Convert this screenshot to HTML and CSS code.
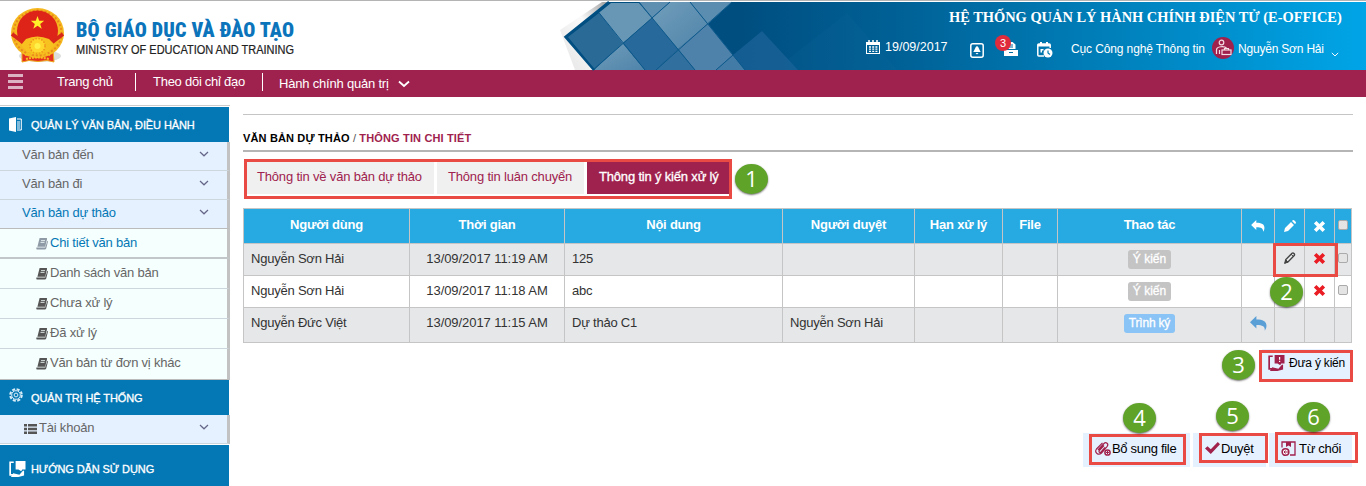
FILE: index.html
```html
<!DOCTYPE html>
<html lang="vi">
<head>
<meta charset="utf-8">
<title>E-Office</title>
<link rel="stylesheet" href="styles.css">
</head>
<body>
<svg class="defs" aria-hidden="true">
  <defs>
    <symbol id="chev" viewBox="0 0 10 6"><path d="M1 1l4 3.800L9 1" fill="none" stroke="currentColor" stroke-width="1.200"/></symbol>
    <symbol id="book" viewBox="0 0 12 12"><path d="M3.600 0h6.600c.8 0 1 .5.8 1.200L9.200 8.700H1.400zM1.200 9.500h8.100l2-6.800c.7.2.7.8.5 1.500L10.200 10.500c-.2.700-.7 1-1.400 1H1.500C.3 11.500.1 10.500.4 9.400z" fill="currentColor"/><path d="M5 2.600h4M4.500 4.400h4" stroke="#f5fffe" stroke-width=".8"/></symbol>
    <symbol id="cross" viewBox="0 0 12 12"><path d="M2 2l8 8M10 2l-8 8" stroke="currentColor" stroke-width="3.300" fill="none"/></symbol>
    <symbol id="reply" viewBox="0 0 16 14"><path d="M6 0v3.200c6 0 9.500 1.600 9.500 6 0 1.800-.7 3.300-1.600 4.600.4-4-1.900-5.400-7.900-5.400v3.400L0 5.800z" fill="currentColor"/></symbol>
    <symbol id="guide" viewBox="0 0 18 17"><path d="M5 1.300H1.200v13.500h3" fill="none" stroke="currentColor" stroke-width="1.800"/><path d="M7 0h10.500v9H14l-1 2-3-2H7zM2 17l2.500-4 6.500 1.500 4-4.500 1 .5v5L10 17z" fill="currentColor"/></symbol>
  </defs>
</svg>

<header class="header">
  <div class="brand">
    <svg class="emblem" viewBox="0 0 58 58">
      <ellipse cx="31" cy="49" rx="21" ry="6" fill="#ddd"/>
      <path d="M13 43h31l1 12-7-1.500-9 1-9-1-7 1.500z" fill="#e5301f" stroke="#f0a81d"/>
      <ellipse cx="28.500" cy="26" rx="26.500" ry="25" fill="#f5b81f"/>
      <ellipse cx="28.500" cy="26" rx="24" ry="22.500" fill="none" stroke="#e98a1c" stroke-width="2" stroke-dasharray="2 2"/>
      <ellipse cx="28.500" cy="24" rx="20.500" ry="20.500" fill="#de2419"/>
      <path d="M28.500 9l1.700 4.700 5 .1-4 3.100 1.500 4.800-4.200-2.900-4.200 2.900 1.500-4.800-4-3.100 5-.1z" fill="#fff02a"/>
      <path d="M3 27l12 9M54 27l-12 9" stroke="#d9261b" stroke-width="4"/>
      <path d="M12 38l5-6q11-5 23 0l6 6-7 7H18z" fill="#f7c21f"/>
      <circle cx="28.500" cy="39" r="7.500" fill="#ffd62c" stroke="#f0921b" stroke-width="1.500" stroke-dasharray="1.500 1.500"/>
      <circle cx="28.500" cy="39" r="3" fill="#fff04a"/>
      <path d="M16 48q12-4 25 0M17 52q11-3 23 0" stroke="#f6c11f" stroke-width="2" stroke-dasharray="2 1" fill="none"/>
    </svg>
    <svg class="brand-text" viewBox="0 0 230 58">
      <text class="brand-vi" x="1" y="30" textLength="218" lengthAdjust="spacing">BỘ GIÁO DỤC VÀ ĐÀO TẠO</text>
      <text class="brand-en" x="1" y="47" textLength="218" lengthAdjust="spacingAndGlyphs">MINISTRY OF EDUCATION AND TRAINING</text>
    </svg>
  </div>
  <div class="banner">
    <svg class="tiles" viewBox="560 2 340 68" preserveAspectRatio="none">
      <defs>
        <linearGradient id="sky" gradientUnits="userSpaceOnUse" x1="740" y1="0" x2="1366" y2="0"><stop offset="0" stop-color="#004e80"/><stop offset=".256" stop-color="#006196"/><stop offset="1" stop-color="#00a5e7"/></linearGradient>
        <linearGradient id="shade" x1="0" y1="1" x2="1" y2="0"><stop offset="0" stop-color="#e4e4e4"/><stop offset=".6" stop-color="#fafafa"/><stop offset="1" stop-color="#999"/></linearGradient>
        <linearGradient id="pale" x1="0" y1="0" x2="1" y2="1"><stop offset="0" stop-color="#719dba"/><stop offset="1" stop-color="#4f84aa"/></linearGradient>
      </defs>
      <path d="M602 2L560 30l15 40h25l10-68z" fill="url(#shade)"/>
      <path d="M609 2H900v68H594L565.500 37z" fill="url(#sky)"/>
      <path d="M568 37l31-24 23.700 30.300L594 69z" fill="#2a6a97"/>
      <path d="M599 12.700L611 3h28l13 15.300-29.300 25z" fill="#6896b5"/>
      <path d="M639 2h31l-18 16.300z" fill="#5e8fb1"/>
      <path d="M622.700 43.300L594 70h51z" fill="url(#pale)"/>
      <path d="M622.700 43.300l29.300-25L678 49l-22 21h-11z" fill="#27699a"/>
      <path d="M652 18.300L670 2h20l18 22-30 25z" fill="url(#pale)"/>
      <path d="M690 2h42l-24 22z" fill="#5b8db0"/>
      <path d="M678 49l30-25 25 31-17 15h-21z" fill="#4e82aa"/>
      <path d="M656 70l22-21 17 21z" fill="#306f9e"/>
      <path d="M716 70l17-15 12 15z" fill="#417ba6"/>
      <path d="M733 55l29-24 36 39h-53z" fill="#1c649a" opacity=".7"/>
      <path d="M787 60l60-47 50 57h-102z" fill="#176ba0" opacity=".15"/>
      <path d="M670 2l-77 68M732 2l-76 68M733 55l-17 15M599 12.700L645 70M639 2l56 68M690 2l55 68" stroke="#0c598c" fill="none"/>
      <path d="M609 2l-43.500 35L594 70" stroke="#004f82" stroke-width="2.500" fill="none"/>
    </svg>
    <div class="banner-info">
      <div class="system">HỆ THỐNG QUẢN LÝ HÀNH CHÍNH ĐIỆN TỬ (E-OFFICE)</div>
      <div class="tools">
        <svg class="i-cal" viewBox="0 0 14 14"><path d="M0 2h14v12H0z" fill="#fff"/><path d="M1 5h12v8H1z" fill="#006196"/><path d="M3 0v4M7 0v4M11 0v4" stroke="#fff" stroke-width="1.500"/><path d="M3 7h8.500M3 9.200h8.500M3 11.400h8.500" stroke="#fff" stroke-width="1.300" stroke-dasharray="2 1.200"/></svg>
        <span class="date">19/09/2017</span>
        <svg class="i-bell" viewBox="0 0 14 15"><rect x=".8" y=".8" width="12.400" height="13.400" rx="2" fill="none" stroke="#fff" stroke-width="1.500"/><path d="M7 3c2 1 2.200 4 3.700 6H3.300C4.800 7 5 4 7 3zM5.500 10h3l-1.500 1.600z" fill="#fff"/></svg>
        <span class="inbox"><svg class="i-inbox" viewBox="0 0 16 14"><path d="M3.500 0h6l3 2.500V7h-9zM1 8h14v6H1z" fill="#fff"/><path d="M6 10.500h4M5 3h5M5 5h5" stroke="#006ca3"/></svg><b class="badge">3</b></span>
        <svg class="i-sched" viewBox="0 0 16 16"><path d="M7 14H1.800a1 1 0 01-1-1V3a1 1 0 011-1h10.400a1 1 0 011 1v3" fill="none" stroke="#fff" stroke-width="1.500"/><path d="M1 2h12v2.500H1zM3 0h2v3H3zM9 0h2v3H9z" fill="#fff"/><circle cx="11" cy="11" r="4.500" fill="#fff"/><path d="M11 8.500V11l2 1.500" stroke="#0078b1" stroke-width="1.200" fill="none"/><path d="M3.500 7h3v1.500h-1.500v2h-1.500z" fill="#fff"/></svg>
        <span class="dept">Cục Công nghệ Thông tin</span>
        <svg class="avatar" viewBox="0 0 22 22"><circle cx="11" cy="11" r="11" fill="#a1214d"/><g fill="none" stroke="#f3dce4" stroke-width="1.200"><circle cx="9.500" cy="5.500" r="2.300"/><path d="M4.500 17v-4c0-4 8-4 10-2M7.500 13v4"/><rect x="10" y="13" width="9" height="4.500"/><path d="M12.500 13v-1.500h4V13"/></g></svg>
        <span class="user">Nguyễn Sơn Hải</span>
        <svg class="i-drop"><use href="#chev"/></svg>
      </div>
    </div>
  </div>
</header>

<nav class="nav">
  <span class="burger"><i></i><i></i><i></i></span>
  <a class="n1">Trang chủ</a>
  <a class="n2">Theo dõi chỉ đạo</a>
  <a class="n3">Hành chính quản trị</a>
  <svg class="nav-chev" viewBox="0 0 12 8"><path d="M1 1.500l5 4.500 5-4.500" fill="none" stroke="#fff" stroke-width="1.800"/></svg>
</nav>

<div class="page">
  <aside class="side">
    <div class="head"><svg class="i-doc" viewBox="0 0 13 15"><path d="M0 1.500L7 0v15l-7-1.500z" fill="#fff"/><path d="M8 2h4.300v11H8" fill="none" stroke="#fff"/><path d="M8 5h3M8 7h3M8 9h3M8 11h3" stroke="#fff"/></svg><span>QUẢN LÝ VĂN BẢN, ĐIỀU HÀNH</span></div>
    <a class="item">Văn bản đến<svg class="chev"><use href="#chev"/></svg></a>
    <a class="item">Văn bản đi<svg class="chev"><use href="#chev"/></svg></a>
    <a class="item open">Văn bản dự thảo<svg class="chev"><use href="#chev"/></svg></a>
    <a class="sub current"><svg class="bk"><use href="#book"/></svg>Chi tiết văn bản</a>
    <a class="sub"><svg class="bk"><use href="#book"/></svg>Danh sách văn bản</a>
    <a class="sub"><svg class="bk"><use href="#book"/></svg>Chưa xử lý</a>
    <a class="sub"><svg class="bk"><use href="#book"/></svg>Đã xử lý</a>
    <a class="sub last"><svg class="bk"><use href="#book"/></svg>Văn bản từ đơn vị khác</a>
    <div class="head second"><svg class="i-gear" viewBox="0 0 14 14"><g fill="none" stroke="#d9edf8"><circle cx="7" cy="7" r="5.800" stroke-width="2" stroke-dasharray="3 1.550"/><circle cx="7" cy="7" r="4.300"/><circle cx="7" cy="7" r="1.900"/></g></svg><span>QUẢN TRỊ HỆ THỐNG</span></div>
    <a class="item account"><svg class="i-list" viewBox="0 0 13 10"><path d="M0 0h3v2.500H0zM4 0h9v2.500H4zM0 3.700h3v2.500H0zM4 3.700h9v2.500H4zM0 7.500h3V10H0zM4 7.500h9V10H4z" fill="#555"/></svg>Tài khoản<svg class="chev"><use href="#chev"/></svg></a>
    <div class="head third"><svg class="i-guide"><use href="#guide"/></svg><span>HƯỚNG DẪN SỬ DỤNG</span></div>
  </aside>

  <main class="main">
    <div class="crumb"><b>VĂN BẢN DỰ THẢO</b> / <strong>THÔNG TIN CHI TIẾT</strong></div>
    <div class="tabs"><a class="tab t1">Thông tin về văn bản dự thảo</a><a class="tab t2">Thông tin luân chuyển</a><a class="tab active">Thông tin ý kiến xử lý</a></div>
    <table class="grid">
      <colgroup><col class="c1"><col class="c2"><col class="c3"><col class="c4"><col class="c5"><col class="c6"><col class="c7"><col class="c8"><col class="c9"><col class="c9"><col class="c11"></colgroup>
      <thead><tr><th>Người dùng</th><th>Thời gian</th><th>Nội dung</th><th>Người duyệt</th><th>Hạn xử lý</th><th>File</th><th>Thao tác</th>
        <th class="ic"><svg class="s-reply"><use href="#reply"/></svg></th>
        <th class="ic"><svg class="s-pen" viewBox="0 0 12 12"><path d="M0 12l1-4 6-6 3 3-6 6zM8 1l1-1q1 0 2 1t1 2l-1 1z" fill="#fff"/></svg></th>
        <th class="ic"><svg class="s-x"><use href="#cross"/></svg></th><th class="ic ck"><i class="box"></i></th></tr></thead>
      <tbody>
        <tr><td>Nguyễn Sơn Hải</td><td class="c">13/09/2017 11:19 AM</td><td>125</td><td></td><td></td><td></td><td class="ic"><span class="tag">Ý kiến</span></td><td></td>
          <td class="ic up"><svg class="s-pen" viewBox="0 0 12 12"><path d="M1 11l.8-3.500L8 1.300q1-.7 2 .2t.2 2.100L4 10z" fill="none" stroke="#444" stroke-width="1.400"/><path d="M7 2.200L9.500 4.500M1 11l1-3 2 2z" fill="#444" stroke="#444"/></svg></td>
          <td class="ic up red"><svg class="s-x"><use href="#cross"/></svg></td><td class="ic up ck"><i class="box"></i></td></tr>
        <tr><td>Nguyễn Sơn Hải</td><td class="c">13/09/2017 11:18 AM</td><td>abc</td><td></td><td></td><td></td><td class="ic"><span class="tag">Ý kiến</span></td><td></td><td></td><td class="ic up red"><svg class="s-x"><use href="#cross"/></svg></td><td class="ic up ck"><i class="box"></i></td></tr>
        <tr class="tall"><td>Nguyễn Đức Việt</td><td class="c">13/09/2017 11:15 AM</td><td>Dự thảo C1</td><td>Nguyễn Sơn Hải</td><td></td><td></td><td class="ic"><span class="tag blue">Trình ký</span></td><td class="ic back"><svg class="s-back"><use href="#reply"/></svg></td><td></td><td></td><td></td></tr>
      </tbody>
    </table>
    <div class="comment-row"><a class="btn comment"><svg class="b-comment" viewBox="0 0 18 17"><use href="#guide" width="18" height="17"/><path d="M12.300 2v3M12.300 6v1.500" stroke="#fff" stroke-width="1.300"/></svg>Đưa ý kiến</a></div>
    <div class="actions">
      <a class="btn a1"><svg class="b-clip" viewBox="0 0 16 15"><path d="M3 9l6-6.500c2-2 5 .5 3.200 2.800L6.500 12c-3 3-7.500-.5-5-4L7.500 1.800M9 4.500L4.300 9.500c-1 1.400.6 2.600 1.800 1.500L10 6.500" fill="none" stroke="#a1214d" stroke-width="1.200"/><circle cx="12.500" cy="11.500" r="2.600" fill="#e5f1ff" stroke="#a1214d" stroke-width="1.500"/><path d="M12.500 10v3M11 11.500h3" stroke="#a1214d"/></svg>Bổ sung file</a>
      <a class="btn a2"><svg class="b-check" viewBox="0 0 15 12"><path d="M0 6.500l2.500-2.300L5.800 7.300 12.800 0 15 2.200 5.800 12z" fill="#a1214d"/></svg>Duyệt</a>
      <a class="btn a3"><svg class="b-rej" viewBox="0 0 15 15"><path d="M1 6.500V1h13v13H9" fill="none" stroke="#a1214d" stroke-width="1.300"/><path d="M5 1h5v5L7.500 4.500 5 6z" fill="#a1214d"/><circle cx="4.500" cy="11" r="3.300" fill="#fff" stroke="#a1214d" stroke-width="1.600"/><path d="M7 11H3M4.500 9.500L3 11l1.500 1.500" fill="none" stroke="#a1214d"/></svg>Từ chối</a>
    </div>
  </main>
</div>

<!-- Step markers laid over the screen -->
<div class="mark m1"></div><div class="mark m2"></div><div class="mark m3"></div><div class="mark m4"></div><div class="mark m5"></div><div class="mark m6"></div>
<div class="step s1">1</div><div class="step s2">2</div><div class="step s3">3</div><div class="step s4">4</div><div class="step s5">5</div><div class="step s6">6</div>
</body>
</html>
```
FILE: styles.css
```css
* { box-sizing: border-box; }
body { margin: 0; width: 1366px; height: 486px; overflow: hidden; position: relative; background: #fff; font: 13px/16px "Liberation Sans", Arial, sans-serif; color: #333; }
svg { display: block; flex: none; overflow: visible; }
.defs { position: absolute; width: 0; height: 0; }

.header { display: flex; height: 70px; border-top: 1px solid #b4b4b4; padding-top: 1px; }
.brand { display: flex; width: 560px; padding: 5px 0 0 9px; }
.emblem { width: 58px; height: 58px; }
.brand-text { width: 230px; height: 58px; margin-left: 8px; }
.brand-vi { font: 900 20px Roboto, sans-serif; font-stretch: condensed; fill: #0b74bb; }
.brand-en { font: 12px "Liberation Sans", Arial, sans-serif; fill: #222; stroke: #222; stroke-width: .2px; }
.banner { display: flex; width: 806px; background: linear-gradient(90deg, transparent 290px, #005e93 290px, #006196 340px, #00a5e7 806px); }
.tiles { width: 340px; height: 68px; margin-right: -50px; }
.banner-info { position: relative; width: 516px; padding: 7px 0 0 16px; color: #fff; }
.system { padding-left: 83px; font: bold 14.420px/16px "Liberation Serif", serif; white-space: nowrap; }
.tools { display: flex; align-items: flex-start; padding-top: 12px; height: 40px; white-space: nowrap; font-size: 12px; }
.i-cal { width: 14px; height: 14px; margin-top: 3px; }
.date { margin: 2px 0 0 5px; width: 85px; font-size: 12.500px; }
.i-bell { width: 14px; height: 15px; margin-top: 6px; }
.inbox { position: relative; margin: 5px 0 0 19px; }
.i-inbox { width: 16px; height: 14px; }
.badge { position: absolute; left: -8px; top: -7px; width: 16px; height: 16px; border-radius: 8px; background: #e02b3c; font: 11px/16px "Liberation Sans", Arial, sans-serif; text-align: center; }
.i-sched { width: 16px; height: 16px; margin: 5px 0 0 18px; }
.dept { margin: 4px 0 0 18px; width: 141px; letter-spacing: -.12px; }
.avatar { width: 22px; height: 22px; }
.user { margin: 4px 0 0 4px; width: 93px; letter-spacing: -.2px; }
.i-drop { width: 8px; height: 5px; margin-top: 15px; }

.nav { display: flex; height: 27px; background: #9f224e; color: #fff; font-size: 13px; letter-spacing: -.26px; white-space: nowrap; }
.burger { width: 57px; padding: 4px 0 0 8px; }
.burger i { display: block; width: 15px; height: 3px; margin-bottom: 3px; background: #dcb3c3; }
.n1, .n2 { height: 18px; margin-top: 3px; line-height: 17px; border-right: 1px solid #fff; }
.n1 { width: 79px; }
.n2 { width: 127px; padding-left: 17px; }
.n3 { width: 135px; padding: 6px 0 0 16px; letter-spacing: -.2px; }
.nav-chev { width: 12px; height: 8px; margin-top: 10px; }

.page { display: flex; padding-top: 8px; }
.side { width: 230px; border-top: 1px solid #ccc; padding-top: 1px; letter-spacing: -.2px; }
.head { display: flex; width: 229px; height: 35px; padding-left: 9px; align-items: center; background: #0477b5; color: #fff; font: 11px/14px "Liberation Sans", Arial, sans-serif; letter-spacing: -.1px; -webkit-text-stroke: .3px #fff; }
.head span { white-space: nowrap; }
.head svg { margin-right: 9px; }
.i-doc { width: 13px; height: 15px; }
.i-gear { width: 14px; height: 14px; margin-top: -5px; }
.head .i-gear { margin-right: 8px; }
.i-guide { width: 17px; height: 16px; }
.head .i-guide { margin-right: 5px; }
.head.third { height: 48px; border-top: 1px solid #fff; }
.item { display: flex; height: 29px; padding: 5px 0 0 22px; background: #e5f1ff; border-bottom: 1px solid #cbd7dc; border-right: 3px solid #c2c2c2; color: #666; }
.chev { width: 10px; height: 6px; margin: 4px 18px 0 auto; color: #668; }
.open { color: #0477b5; border-bottom-color: #bbb; }
.side .item, .side .sub { width: 230px; }
.sub { display: flex; height: 30px; padding: 6px 0 0 36px; background: #f5fffe; border-bottom: 1px solid #cbd7dc; border-right: 3px solid #c2c2c2; color: #666; }
.bk { width: 12px; height: 12px; margin: 3px 2px 0 0; color: #555; }
.current { color: #0477b5; border-bottom: 2px solid #c2c8ca; }
.current .bk { color: #8e9aa5; }
.last { height: 31px; border-bottom: 1px solid #bbb; }
.account { height: 29px; padding-left: 24px; }
.i-list { width: 13px; height: 10px; margin: 4px 2px 0 0; }

.main { width: 1110px; margin: 9px 0 0 13px; }
.crumb { height: 38px; border-top: 1px solid #c5c5c5; border-bottom: 2px solid #b5b5b5; padding-top: 16px; font-size: 11px; line-height: 15px; letter-spacing: .15px; color: #555; white-space: nowrap; }
.crumb b { color: #000; font-weight: bold; }
.crumb strong { color: #9f224e; }
.tabs { display: flex; gap: 3px; height: 56px; padding: 10px 0 0 3px; }
.tab { height: 32px; padding: 7px 0 0 11px; background: #f0f0f0; color: #9f224e; font-size: 13px; letter-spacing: -.18px; white-space: nowrap; }
.t1 { width: 188px; }
.t2 { width: 147px; }
.active { width: 143px; padding-left: 12px; background: #9f224e; color: #fff; -webkit-text-stroke: .3px #fff; }

.grid { width: 1109px; table-layout: fixed; border-collapse: collapse; }
.c1 { width: 166px; } .c2 { width: 155px; } .c3 { width: 218px; } .c4 { width: 132px; } .c5 { width: 88px; } .c6 { width: 55px; } .c7 { width: 184px; } .c8 { width: 33px; } .c9 { width: 30px; } .c11 { width: 17px; }
.grid th, .grid td { height: 32px; padding: 0 0 2px 7px; border: 1px solid #c5c5c5; text-align: left; vertical-align: middle; font-size: 13px; line-height: 16px; letter-spacing: -.22px; }
.grid th { height: 35px; padding: 0 0 2px; background: #27a9e1; color: #fff; text-align: center; }
.grid .tall td { height: 35px; padding-bottom: 4px; }
.grid tr:nth-child(odd) td { background: #e5e7e9; }
.grid .c { text-align: center; padding-left: 0; letter-spacing: -.07px; }
.grid .ic { text-align: center; padding: 0; }
.grid .up { padding-bottom: 3px; }
.grid .ic svg { margin: 0 auto; }
.s-reply { width: 14px; height: 12px; }
.s-pen { width: 12px; height: 12px; }
.s-x { width: 13px; height: 13px; }
.red { color: #ea1c24; }
.s-back { width: 17px; height: 15px; }
.back { color: #5a9fd6; }
.box { display: block; width: 10px; height: 10px; margin: 0 auto 0 3px; border: 1px solid #aaa; border-radius: 2px; background: #e4e4e4; }
th .box { margin-bottom: 3px; }
.tag { display: inline-block; height: 19px; padding: 0 5px; border-radius: 3px; background: #c4c4c4; color: #fff; font-size: 12px; line-height: 19px; letter-spacing: 0; vertical-align: middle; -webkit-text-stroke: .3px #fff; }
.blue { background: #8ac3f5; letter-spacing: -.2px; }

.comment-row { display: flex; justify-content: flex-end; padding: 6px 1px 0 0; }
.btn { display: flex; background: #e5f1ff; color: #000; font-size: 13px; letter-spacing: -.3px; white-space: nowrap; }
.comment { width: 90px; height: 32px; padding: 6px 0 0 6px; font-size: 12px; letter-spacing: -.2px; }
.b-comment { width: 17px; height: 16px; margin-right: 4px; color: #a1214d; }
.actions { display: flex; justify-content: flex-end; gap: 3px; margin: 52px 1px 0 0; }
.actions .btn { height: 34px; padding-top: 8px; }
.actions .a1 { width: 107px; padding-left: 12px; }
.actions .a2 { width: 73px; padding-left: 12px; }
.actions .a3 { width: 83px; padding-left: 12px; }
.b-clip { width: 16px; height: 15px; margin-right: 1px; }
.b-check { width: 15px; height: 12px; margin: 1px 1px 0 0; }
.b-rej { width: 15px; height: 15px; margin-right: 3px; }

.mark { position: absolute; border: 3px solid #e94b44; }
.m1 { left: 244px; top: 159px; width: 488px; height: 40px; }
.m2 { left: 1273px; top: 243px; width: 65px; height: 34px; }
.m3 { left: 1259px; top: 350px; width: 94px; height: 32px; }
.m4 { left: 1089px; top: 434px; width: 97px; height: 31px; }
.m5 { left: 1199px; top: 433px; width: 69px; height: 30px; }
.m6 { left: 1275px; top: 432px; width: 83px; height: 31px; }
.step { position: absolute; width: 33px; height: 30px; border-radius: 50%; background: #5fa328; box-shadow: 0 1px 2px rgba(0,0,0,.55); color: #fff; font: 22px/28px "Open Sans", "Noto Sans", sans-serif; text-align: center; }
.s1 { left: 735px; top: 164px; }
.s2 { left: 1270px; top: 277px; }
.s3 { left: 1222px; top: 350px; }
.s4 { left: 1123px; top: 403px; }
.s5 { left: 1216px; top: 401px; }
.s6 { left: 1297px; top: 402px; }
```
